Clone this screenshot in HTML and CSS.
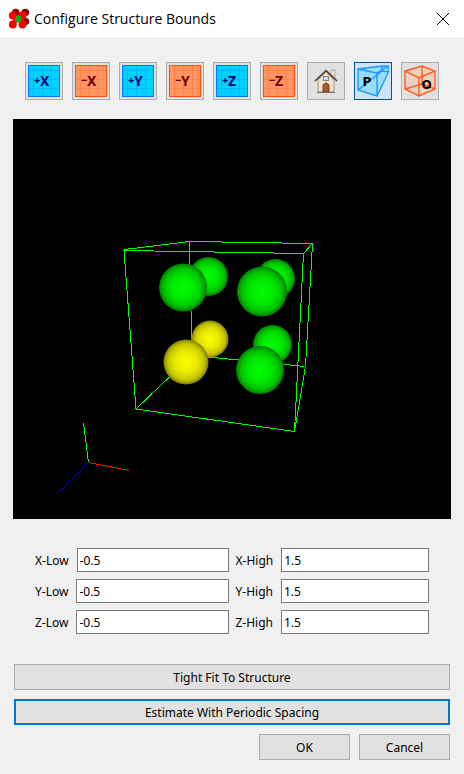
FILE: index.html
```html
<!DOCTYPE html>
<html lang="en">
<head>
<meta charset="utf-8">
<title>Configure Structure Bounds</title>
<meta name="viewport" content="width=device-width, initial-scale=1">
<link rel="stylesheet" href="styles.css">
</head>
<body>
<svg width="0" height="0" class="defs" aria-hidden="true">
  <defs>
    <g id="grid">
      <rect x="0" y="0" width="32" height="32" class="tile-edge"/>
      <rect x="1" y="1" width="30" height="30" class="tile-fill"/>
      <path d="M5.500 1V31M14.500 1V31M23.500 1V31M1 5.500H31M1 14.500H31M1 23.500H31" class="tile-line"/>
    </g>
  </defs>
</svg>
<header class="titlebar">
  <svg class="logo" viewBox="0 0 22 22" aria-hidden="true">
    <g fill="#8c0000"><circle cx="7.700" cy="4.500" r="3.800"/><circle cx="17.300" cy="4.500" r="3.800"/><circle cx="17.300" cy="13.500" r="3.800"/></g>
    <g fill="#ff0000"><circle cx="4.800" cy="7.500" r="3.900"/><circle cx="14.500" cy="7.500" r="3.900"/></g>
    <g fill="#ff0000"><circle cx="4.800" cy="16.500" r="3.900"/><circle cx="14.500" cy="16.500" r="3.900"/><path d="M4 14L7 9H14L17 14L13 17L10 13L7 17Z"/></g>
    <circle cx="10.300" cy="11" r="3.400" fill="#14a814"/>
  </svg>
  <h1>Configure Structure Bounds</h1>
  <button class="close" type="button" aria-label="Close"><svg viewBox="0 0 12 12"><path d="M0 0L12 12M12 0L0 12" stroke="#000" fill="none"/></svg></button>
</header>
<main>
  <div class="toolbar" role="toolbar" aria-label="View direction">
    <button type="button" class="tool plus"><svg viewBox="0 0 32 32"><use href="#grid"/><text x="6" y="19" class="sign">+</text><text x="12" y="21">X</text></svg></button>
    <button type="button" class="tool minus"><svg viewBox="0 0 32 32"><use href="#grid"/><text x="6" y="19" class="sign">−</text><text x="12" y="21">X</text></svg></button>
    <button type="button" class="tool plus"><svg viewBox="0 0 32 32"><use href="#grid"/><text x="6" y="19" class="sign">+</text><text x="12" y="21">Y</text></svg></button>
    <button type="button" class="tool minus"><svg viewBox="0 0 32 32"><use href="#grid"/><text x="6" y="19" class="sign">−</text><text x="12" y="21">Y</text></svg></button>
    <button type="button" class="tool plus"><svg viewBox="0 0 32 32"><use href="#grid"/><text x="6" y="19" class="sign">+</text><text x="12" y="21">Z</text></svg></button>
    <button type="button" class="tool minus"><svg viewBox="0 0 32 32"><use href="#grid"/><text x="6" y="19" class="sign">−</text><text x="12" y="21">Z</text></svg></button>
    <button type="button" class="tool" aria-label="Reset view">
      <svg viewBox="0 0 32 32">
        <path d="M21 5H25V13L21 9Z" fill="#efe0cc" stroke="#a08c78" stroke-width=".6"/>
        <path d="M8 15L16 7L24 15V27H8Z" fill="#f0e2cf" stroke="#927c68" stroke-width=".8"/>
        <path d="M5 16L16 5.500L27 16" fill="none" stroke="#493b3d" stroke-width="1.500"/>
        <rect x="13.500" y="11.500" width="5" height="4" fill="#b8e2ff" stroke="#8a6a50" stroke-width=".8"/>
        <path d="M13 27V20Q16 16 19 20V27Z" fill="#a85c22" stroke="#5c3014" stroke-width=".8"/>
        <path d="M7 27.500H25" stroke="#7d7068"/>
      </svg>
    </button>
    <button type="button" class="tool active" aria-label="Perspective projection" aria-pressed="true">
      <svg viewBox="0 0 32 32">
        <path d="M1 4L25 1H31.500V7L20 31L1 25Z" fill="#99dcfa"/>
        <path d="M1 4L20 8V31L1 25ZM1 4L25 1L31.500 1L20 8M31.500 1V7L20 31M25 1V6L1 25M25 6L31.500 7" fill="none" stroke="#1e96ff" stroke-width="1.400"/>
        <text x="5.500" y="21" class="letter">P</text>
      </svg>
    </button>
    <button type="button" class="tool ortho" aria-label="Orthographic projection">
      <svg viewBox="0 0 32 32">
        <path d="M1 6L18 1L31 6V24L15 31L1 24Z" fill="#ecd0c2"/>
        <path d="M1 6L18 1L31 6L15 13ZM1 6V24L15 31L31 24V6M15 13V31M18 1V19L1 24M18 19L31 24" fill="none" stroke="#ff5c1c" stroke-width="1.400"/>
        <text x="17.500" y="24" class="letter">O</text>
      </svg>
    </button>
  </div>
  <svg class="scene" viewBox="13 119 438 400" role="img" aria-label="Structure preview">
    <defs>
      <radialGradient id="green"><stop offset="0" stop-color="#00ff00"/><stop offset=".5" stop-color="#00e800"/><stop offset=".8" stop-color="#00c200"/><stop offset=".95" stop-color="#009000"/><stop offset="1" stop-color="#006c00"/></radialGradient>
      <radialGradient id="yellow"><stop offset="0" stop-color="#ffff00"/><stop offset=".5" stop-color="#e8e800"/><stop offset=".8" stop-color="#c6c600"/><stop offset=".95" stop-color="#949400"/><stop offset="1" stop-color="#707000"/></radialGradient>
    </defs>
    <rect x="13" y="119" width="438" height="400"/>
    <g class="wire" stroke="#00ff00">
      <path d="M124.500 249.500L189.500 241.500L312.500 243.500M189.500 241.500L192 355.500L136 409M192 355.500L305.500 366.500"/>
    </g>
    <g fill="url(#green)">
      <circle cx="208.500" cy="276.500" r="19.500"/><circle cx="183" cy="287.500" r="24"/>
      <circle cx="275.500" cy="278.500" r="19.500"/><circle cx="262" cy="291.500" r="25"/>
      <circle cx="272.500" cy="344.500" r="19.500"/><circle cx="260" cy="370" r="24"/>
    </g>
    <g fill="url(#yellow)"><circle cx="210" cy="339" r="18.500"/><circle cx="186" cy="362" r="22.500"/></g>
    <g class="wire" stroke="#00ff00">
      <path d="M124 250.500L303.500 253.500L294.500 431.500L136 409ZM303.500 253.500L312.500 243.500L305.500 366.500L294.500 431.500"/>
    </g>
    <g class="wire">
      <path d="M88.500 462.500L83.500 423" stroke="#00ff00"/><path d="M88.500 462.500L129.500 470.500" stroke="#ff0000"/><path d="M88.500 462.500L57 494" stroke="#0000ff"/>
    </g>
  </svg>
  <form class="panel">
    <div class="bounds">
      <div class="column">
        <div class="field"><label for="xl">X-Low</label><input id="xl" type="text" value="-0.5"></div>
        <div class="field"><label for="yl">Y-Low</label><input id="yl" type="text" value="-0.5"></div>
        <div class="field"><label for="zl">Z-Low</label><input id="zl" type="text" value="-0.5"></div>
      </div>
      <div class="column">
        <div class="field"><label for="xh">X-High</label><input id="xh" type="text" value="1.5"></div>
        <div class="field"><label for="yh">Y-High</label><input id="yh" type="text" value="1.5"></div>
        <div class="field"><label for="zh">Z-High</label><input id="zh" type="text" value="1.5"></div>
      </div>
    </div>
    <div class="actions">
      <button type="button" class="btn">Tight Fit To Structure</button>
      <button type="button" class="btn default">Estimate With Periodic Spacing</button>
      <div class="confirm">
        <button type="button" class="btn">OK</button>
        <button type="button" class="btn">Cancel</button>
      </div>
    </div>
  </form>
</main>
</body>
</html>
```
FILE: styles.css
```css
* { box-sizing: border-box; }
body { margin: 0; background: #f0f0f0; color: #000; font: 12px/16px "Noto Sans", "Open Sans", sans-serif; }
button, input { font: inherit; color: inherit; border-radius: 0; margin: 0; }
svg { display: block; }
.defs { position: absolute; }
.titlebar { display: flex; align-items: center; height: 37px; padding: 0 15px 0 8px; background: #fff; }
.logo { width: 22px; height: 22px; }
.titlebar h1 { flex: 1; margin: 0 0 0 4px; font: 400 14px/20px "Open Sans", sans-serif; }
.close { padding: 0; border: 0; background: none; }
.close svg { width: 12px; height: 12px; }
.toolbar { display: flex; justify-content: center; gap: 9px; padding: 25px 13px 19px; }
.tool { width: 38px; height: 38px; padding: 2px; border: 1px solid #adadad; background: #e1e1e1; }
.tool.active { border-color: #005499; background: #cce4f7; }
.tool svg { width: 32px; height: 32px; }
.tool text { font: 700 14px "Noto Sans", sans-serif; }
.tool .sign { font-size: 11px; }
.tool .letter { font: 700 12px "DejaVu Sans", sans-serif; fill: #000; }
.plus { fill: #000078; --edge: #0078ff; --tile: #00d2ff; --line: #00b4ff; }
.minus { fill: #780000; --edge: #ff500a; --tile: #ff9664; --line: #ff824b; }
.tile-edge { fill: var(--edge); }
.tile-fill { fill: var(--tile); }
.tile-line { stroke: var(--line); }
.scene { width: calc(100% - 26px); height: auto; margin: 0 13px; }
.wire { fill: none; shape-rendering: crispEdges; }
.bounds { display: flex; gap: 7px; padding: 29px 35px 30px; }
.column { flex: 1; min-width: 0; display: grid; grid-template-columns: minmax(0, 1fr); gap: 7px; }
.field { display: flex; align-items: center; gap: 8px; }
.field label { padding-top: 1px; }
.field input { flex: 1; min-width: 0; height: 24px; padding: 0 2px; border: 1px solid #7a7a7a; background: #fff; }
.actions { display: grid; gap: 9px; padding: 0 14px 14px; }
.btn { height: 26px; padding: 1px 8px 0; border: 1px solid #adadad; background: #e1e1e1; }
.btn.default { border: 2px solid #0078d7; }
.confirm { display: flex; justify-content: flex-end; gap: 9px; }
.confirm .btn { width: 91px; }
```
